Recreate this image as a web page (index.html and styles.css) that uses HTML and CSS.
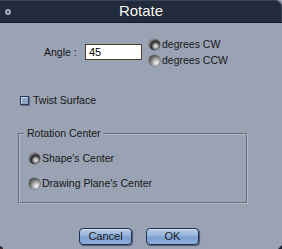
FILE: index.html
```html
<!DOCTYPE html>
<html>
<head>
<meta charset="utf-8">
<link rel="stylesheet" href="styles.css">
</head>
<body>
<div class="window">
  <div class="titlebar">
    <span class="close-dot"></span>
    <span class="title">Rotate</span>
  </div>
  <div class="content">
    <div class="angle-row">
      <label class="label">Angle :</label>
      <div class="input">45</div>
      <div class="radio-col">
        <div class="opt"><span class="radio on"></span><span>degrees CW</span></div>
        <div class="opt"><span class="radio"></span><span>degrees CCW</span></div>
      </div>
    </div>
    <div class="twist-row">
      <span class="check"></span><span>Twist Surface</span>
    </div>
    <fieldset class="group">
      <legend>Rotation Center</legend>
      <div class="opt opt-big"><span class="radio on"></span><span>Shape's Center</span></div>
      <div class="opt opt-big"><span class="radio"></span><span>Drawing Plane's Center</span></div>
    </fieldset>
    <div class="buttons">
      <button class="btn">Cancel</button>
      <button class="btn">OK</button>
    </div>
  </div>
  <span class="corner-bl"></span>
  <span class="corner-br"></span>
</div>
</body>
</html>
```
FILE: styles.css
```css
* { box-sizing: border-box; }
html, body { margin: 0; padding: 0; }
body {
  width: 282px;
  height: 249px;
  overflow: hidden;
  background: #9aa3b4;
  font-family: "Liberation Sans", Arial, sans-serif;
  font-size: 10.5px;
  color: #161616;
}
.window {
  position: relative;
  width: 282px;
  height: 249px;
}
.titlebar {
  height: 23px;
  background: #222b3c;
  border-bottom: 1px solid #121722;
  border-top-right-radius: 7px;
  box-shadow: inset -1px 1px 0 #3a4458;
  display: flex;
  align-items: center;
  justify-content: center;
  position: relative;
}
.close-dot {
  position: absolute;
  left: 5px;
  top: 9px;
  width: 6px;
  height: 6px;
  border-radius: 50%;
  border: 2px solid #a4a9b3;
  background: #3a4050;
}
.title {
  color: #ffffff;
  font-size: 15px;
  line-height: 18px;
  text-shadow: 0 0 1px #000;
  margin-top: 0px;
}
.content {
  display: flex;
  flex-direction: column;
}
.angle-row {
  display: flex;
  align-items: center;
  margin-top: 13px;
  padding-left: 44px;
}
.label {
  width: 41px;
}
.input {
  width: 57px;
  height: 16px;
  background: #fff;
  border: 1px solid #4b3a26;
  padding-left: 3px;
  line-height: 14px;
  font-size: 11px;
  color: #000;
}
.radio-col {
  display: flex;
  flex-direction: column;
  margin-left: 7px;
}
.opt {
  display: flex;
  align-items: center;
  height: 16px;
  gap: 2px;
}
.radio {
  width: 11px;
  height: 11px;
  border-radius: 50%;
  background: radial-gradient(circle at 68% 72%, #f4f4f4 0%, #b8b8b8 30%, #6a6a6a 60%, #2a2a2a 95%);
  box-shadow: 0 0 0 0.5px #555;
  flex: none;
}
.radio.on {
  background:
    radial-gradient(circle at 62% 65%, #f0f0f0 0%, #9a9a9a 25%, #2a2a2a 45%, #505050 60%, #b0b0b0 80%, #707070 100%);
}
.twist-row {
  display: flex;
  align-items: center;
  height: 14px;
  margin-top: 25px;
  padding-left: 20px;
  gap: 4px;
}
.check {
  width: 9px;
  height: 9px;
  border: 1px solid #24365a;
  background: #8ea3c4;
  box-shadow: inset 1px 1px 0 #c4d2e6, 1px 1px 1px #6a7488;
}
.group {
  margin: 20px 0 0 18px;
  width: 230px;
  border: 2px groove #b4bccb;
  padding: 10px 8px 11px 9px;
}
.group legend {
  padding: 0 3px;
  margin-left: -5px;
  line-height: 13px;
  font-size: 10.5px;
}
.opt-big {
  height: 16px;
  gap: 2px;
}
.opt-big + .opt-big {
  margin-top: 9px;
}
.buttons {
  display: flex;
  justify-content: center;
  gap: 14px;
  margin-top: 24px;
  padding-right: 4px;
}
.btn {
  width: 53px;
  height: 17px;
  padding: 0;
  border: 1px solid #1e3150;
  border-radius: 4px;
  background: linear-gradient(#b6cbe8 0%, #93b2db 45%, #7c9fcf 55%, #8eaedb 100%);
  box-shadow: inset 0 1px 0 #d4e2f4, 1px 1px 1px #4c5670;
  font-family: "Liberation Sans", Arial, sans-serif;
  font-size: 11px;
  color: #161a22;
  line-height: 15px;
}
.corner-bl {
  position: absolute;
  left: 0;
  bottom: 0;
  width: 3px;
  height: 3px;
  background: #3a2a30;
  border-top-right-radius: 3px;
}
.corner-br {
  position: absolute;
  right: 0;
  bottom: 0;
  width: 0;
  height: 0;
  border-left: 4px solid transparent;
  border-bottom: 4px solid #1c2230;
}
```
